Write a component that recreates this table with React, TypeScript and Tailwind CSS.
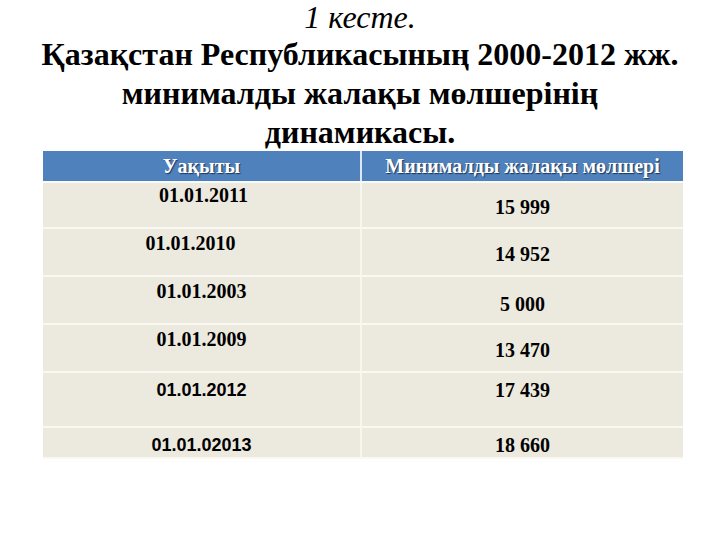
import React from "react";

type Row = {
  date: string;
  amount: string;
  rowClass: string;
  dateClass: string;
  amountClass: string;
  sans?: boolean;
};

const ROWS: Row[] = [
  { date: "01.01.2011", amount: "15 999", rowClass: "h-[46px]", dateClass: "pt-0 pl-[4px]", amountClass: "pt-[12px]" },
  { date: "01.01.2010", amount: "14 952", rowClass: "h-[48px]", dateClass: "pt-[2px] pr-[22px]", amountClass: "pt-[13px]" },
  { date: "01.01.2003", amount: "5 000", rowClass: "h-[48px]", dateClass: "pt-[2px]", amountClass: "pt-[15px]" },
  { date: "01.01.2009", amount: "13 470", rowClass: "h-[48px]", dateClass: "pt-[2px]", amountClass: "pt-[13px]" },
  { date: "01.01.2012", amount: "17 439", rowClass: "h-[55px]", dateClass: "pt-[5px]", amountClass: "pt-[5px]", sans: true },
  { date: "01.01.02013", amount: "18 660", rowClass: "h-[31px]", dateClass: "pt-[5px]", amountClass: "pt-[5px]", sans: true },
];

export default function App(): React.ReactElement {
  return (
    <div className="h-[540px] w-[720px] overflow-hidden bg-white text-black [font-family:'Liberation_Serif','Times_New_Roman',serif]">
      <div className="flex flex-col items-center whitespace-nowrap">
        <div className="h-[35px] text-[32px] italic leading-[35px]">1 кесте.</div>
        <div className="text-[32px] font-bold leading-[39px]">Қазақстан Республикасының 2000-2012 жж.</div>
        <div className="text-[32px] font-bold leading-[39px]">минималды жалақы мөлшерінің</div>
        <div className="text-[32px] font-bold leading-[39px]">динамикасы.</div>
      </div>

      <div className="ml-[43px] mt-[-1px] w-[640px]">
        <div className="flex h-[32px] border-b-2 border-[#f7f9fb] bg-[#4f81bd] text-[20px] font-bold leading-[30px] text-white [text-shadow:1px_1px_1px_#1d3557]">
          <div className="w-[319px] border-r-2 border-[#dfe8f2] text-center">Уақыты</div>
          <div className="flex-1 text-center">Минималды жалақы мөлшері</div>
        </div>

        {ROWS.map((row) => (
          <div key={row.date} className={`flex border-b-2 border-[#faf8f1] bg-[#ece9df] ${row.rowClass}`}>
            <div
              className={`w-[319px] border-r-2 border-[#f8f6ef] text-center leading-[24px] font-bold ${
                row.sans ? "[font-family:'Liberation_Sans',Arial,sans-serif] text-[18px]" : "text-[20px]"
              } ${row.dateClass}`}
            >
              {row.date}
            </div>
            <div className={`flex-1 text-center text-[20px] font-bold leading-[24px] ${row.amountClass}`}>
              {row.amount}
            </div>
          </div>
        ))}
      </div>
    </div>
  );
}
